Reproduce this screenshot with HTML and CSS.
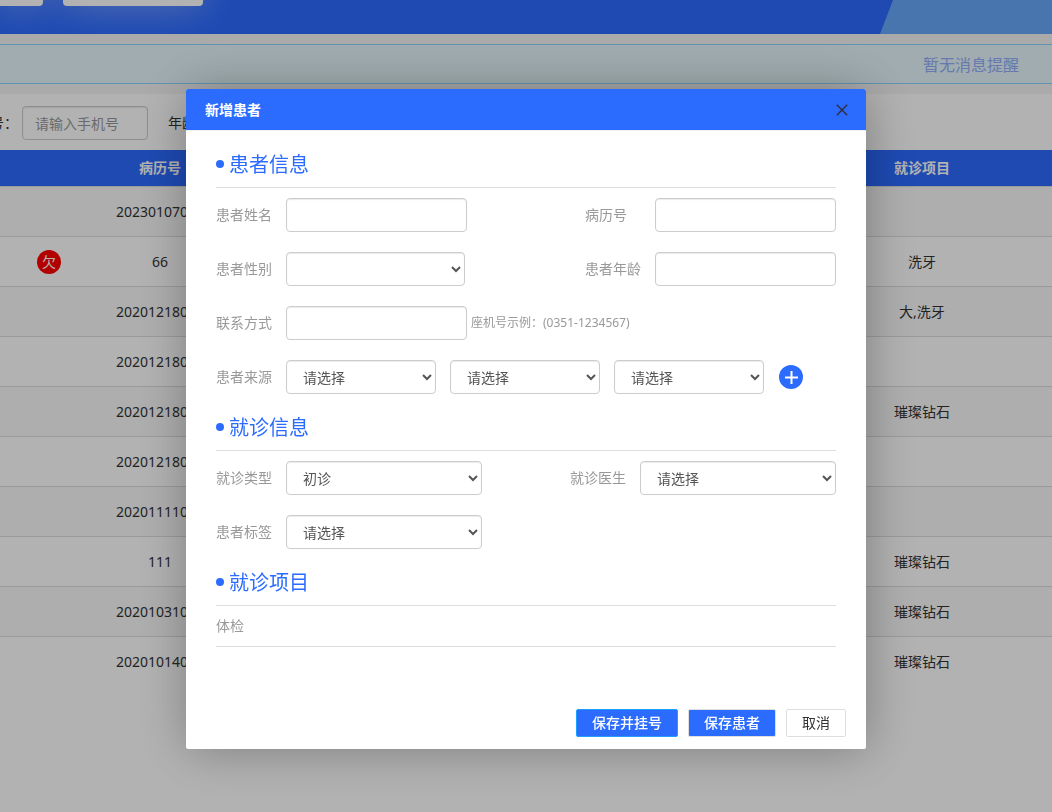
FILE: index.html
```
<!DOCTYPE html>
<html lang="zh-CN">
<head>
<meta charset="utf-8">
<title>新增患者</title>
<link rel="stylesheet" href="styles.css">
</head>
<body>
<main class="page">
  <header class="banner">
    <div class="banner-card banner-card-first"></div>
    <div class="banner-card"></div>
    <svg class="banner-slope" viewBox="0 0 172 34" preserveAspectRatio="none" aria-hidden="true"><path d="M13 0H172V34H0Z" fill="#68a8fa"/></svg>
  </header>
  <div class="notice"><span>暂无消息提醒</span></div>
  <section class="content">
    <div class="filters">
      <label class="filter-label" for="phone">手机号：</label>
      <input class="filter-input" id="phone" type="text" placeholder="请输入手机号">
      <span class="filter-age">年龄：</span>
    </div>
    <table class="records">
      <colgroup><col class="col-flag"><col class="col-number"><col><col class="col-item"></colgroup>
      <thead><tr><th></th><th>病历号</th><th></th><th>就诊项目</th></tr></thead>
      <tbody>
        <tr><td></td><td>20230107001</td><td></td><td></td></tr>
        <tr><td><span class="owed">欠</span></td><td>66</td><td></td><td>洗牙</td></tr>
        <tr><td></td><td>20201218004</td><td></td><td>大,洗牙</td></tr>
        <tr><td></td><td>20201218003</td><td></td><td></td></tr>
        <tr><td></td><td>20201218002</td><td></td><td>璀璨钻石</td></tr>
        <tr><td></td><td>20201218001</td><td></td><td></td></tr>
        <tr><td></td><td>20201111001</td><td></td><td></td></tr>
        <tr><td></td><td>111</td><td></td><td>璀璨钻石</td></tr>
        <tr><td></td><td>20201031001</td><td></td><td>璀璨钻石</td></tr>
        <tr><td></td><td>20201014001</td><td></td><td>璀璨钻石</td></tr>
      </tbody>
    </table>
  </section>
</main>
<div class="overlay">
  <form class="dialog" role="dialog" aria-labelledby="dialog-title">
    <header class="dialog-header">
      <h1 class="dialog-title" id="dialog-title">新增患者</h1>
      <button class="close" type="button" aria-label="关闭"><svg width="12" height="12" viewBox="0 0 12 12"><path d="M.8.8l10.4 10.4M11.2.8L.8 11.2" stroke="#2e2d3c" stroke-width="1.4"/></svg></button>
    </header>
    <div class="dialog-body">
      <section class="section">
        <h2 class="section-title">患者信息</h2>
        <div class="fields">
          <div class="row">
            <div class="field"><label for="name">患者姓名</label><input class="control" id="name" type="text"></div>
            <div class="field"><label for="number">病历号</label><input class="control" id="number" type="text"></div>
          </div>
          <div class="row">
            <div class="field"><label for="sex">患者性别</label><select class="control control-sex" id="sex"><option></option><option>男</option><option>女</option></select></div>
            <div class="field"><label for="age">患者年龄</label><input class="control" id="age" type="text"></div>
          </div>
          <div class="row">
            <div class="field"><label for="contact">联系方式</label><input class="control" id="contact" type="text"><span class="hint">座机号示例：(0351-1234567)</span></div>
          </div>
          <div class="row">
            <div class="field"><label for="source">患者来源</label>
              <div class="sources">
                <select class="control control-source" id="source"><option>请选择</option></select>
                <select class="control control-source" aria-label="二级来源"><option>请选择</option></select>
                <select class="control control-source" aria-label="三级来源"><option>请选择</option></select>
                <button class="add" type="button" aria-label="添加来源"><svg width="24" height="24" viewBox="0 0 24 24"><circle cx="12" cy="12" r="12" fill="#2b6cff"/><path d="M6 12.5h13M12.5 6v13" stroke="#fff" stroke-width="2"/></svg></button>
              </div>
            </div>
          </div>
        </div>
      </section>
      <section class="section">
        <h2 class="section-title">就诊信息</h2>
        <div class="fields">
          <div class="row">
            <div class="field"><label for="type">就诊类型</label><select class="control control-wide" id="type"><option>初诊</option><option>复诊</option></select></div>
            <div class="field"><label for="doctor">就诊医生</label><select class="control control-wide" id="doctor"><option>请选择</option></select></div>
          </div>
          <div class="row">
            <div class="field"><label for="tag">患者标签</label><select class="control control-wide" id="tag"><option>请选择</option></select></div>
          </div>
        </div>
      </section>
      <section class="section">
        <h2 class="section-title">就诊项目</h2>
        <div class="project">体检</div>
      </section>
    </div>
    <footer class="dialog-footer">
      <button class="btn btn-main" type="submit">保存并挂号</button>
      <button class="btn btn-save" type="button">保存患者</button>
      <button class="btn" type="button">取消</button>
    </footer>
  </form>
</div>
</body>
</html>
```
FILE: styles.css
```
* { box-sizing: border-box; }

body {
  margin: 0;
  background: #fff;
  color: #333;
  font: 14px/20px "Noto Sans", "Noto Sans CJK SC", sans-serif;
}

input, select, button { font: inherit; }

.page { min-height: 100vh; overflow: hidden; }

.banner {
  position: relative;
  display: flex;
  align-items: flex-start;
  gap: 20px;
  height: 34px;
  overflow: hidden;
  background: #2b6aff;
}

.banner-card {
  width: 140px;
  height: 66px;
  margin-top: -60px;
  border-radius: 0 0 4px 4px;
  background: #fff;
  box-shadow: 0 0 40px rgba(255, 255, 255, .4);
}

.banner-card-first { width: 43px; border-radius: 0 0 4px 0; }

.banner-slope {
  position: absolute;
  top: 0;
  right: 0;
  width: 172px;
  height: 34px;
}

.notice {
  display: flex;
  align-items: center;
  justify-content: flex-end;
  height: 40px;
  margin: 10px 0;
  padding: 2px 33px 0 0;
  border: solid #8cd4ff;
  border-width: 1px 0;
  background: #e6f7fc;
  color: #94aefa;
  font-size: 16px;
  box-shadow: 0 0 0 10px #f4f4f4;
}

.filters {
  display: flex;
  align-items: center;
  padding: 12px 0 10px;
}

.filter-label {
  display: flex;
  justify-content: flex-end;
  width: 18px;
  margin-right: 4px;
  overflow: hidden;
  white-space: nowrap;
}

.filter-input {
  width: 126px;
  height: 34px;
  margin-right: 20px;
  padding: 0 12px;
  border: 1px solid #ccc;
  border-radius: 4px;
  background: #fff;
  box-shadow: inset 0 1px 1px rgba(0, 0, 0, .08);
}

.filter-input::placeholder { color: #999; }

.records {
  width: 100%;
  border-collapse: separate;
  border-spacing: 0;
  table-layout: fixed;
  text-align: center;
}

.col-flag { width: 98px; }
.col-number { width: 124px; }
.col-item { width: 260px; }

.records th, .records td { padding: 0; border-bottom: 1px solid #ddd; }
.records th { height: 37px; background: #2b6aff; color: #fff; font-weight: 700; }
.records td { height: 50px; }
.records tbody tr:nth-child(odd) { background: #f9f9f9; }
.records tbody tr:last-child td { border-bottom: 0; }

.owed {
  display: inline-block;
  width: 24px;
  border-radius: 50%;
  background: #f00;
  color: #fff;
  line-height: 24px;
}

.overlay {
  position: fixed;
  inset: 0;
  display: flex;
  align-items: flex-start;
  justify-content: center;
  padding-top: 89px;
  background: rgba(0, 0, 0, .3);
}

.dialog {
  display: flex;
  flex-direction: column;
  width: 680px;
  max-width: 100%;
  overflow: hidden;
  border-radius: 2px;
  background: #fff;
  box-shadow: 1px 1px 50px rgba(0, 0, 0, .3);
}

.dialog-header {
  display: flex;
  align-items: center;
  justify-content: space-between;
  height: 42px;
  padding: 1px 18px 0 19px;
  border-bottom: 1px solid #eee;
  background: #2b6cff;
}

.dialog-title { margin: 0; color: #fff; font-size: 14px; line-height: 20px; }

.close, .add {
  display: flex;
  padding: 0;
  border: 0;
  background: none;
  cursor: pointer;
}

.dialog-body { padding: 12px 30px 0; }

.section-title {
  display: flex;
  align-items: center;
  gap: 5px;
  height: 45px;
  margin: 0;
  border-bottom: 1px solid #ddd;
  color: #2b6cff;
  font-size: 20px;
  font-weight: 400;
  line-height: 28px;
}

.section-title::before {
  content: "";
  width: 8px;
  height: 8px;
  margin-bottom: 2px;
  border-radius: 50%;
  background: #2b6cff;
}

.fields { display: flex; flex-direction: column; gap: 20px; padding: 10px 0 12px; }
.row { display: flex; justify-content: space-between; }
.field { display: flex; align-items: center; color: #999; }
.field label { width: 70px; }

.control {
  width: 181px;
  height: 34px;
  padding: 6px 12px;
  border: 1px solid #ccc;
  border-radius: 4px;
  background-color: #fff;
  color: #555;
  box-shadow: inset 0 1px 1px rgba(0, 0, 0, .08);
}

select.control { padding: 6px 1px 6px 12px; }
.control-sex { width: 179px; }
.control-source { width: 150px; }
.control-wide { width: 196px; }
.hint { margin-left: 4px; font-size: 12px; }
.sources { display: flex; align-items: center; gap: 14px; }
.add { margin-left: 1px; }
.project { padding: 10px 0; border-bottom: 1px solid #ddd; color: #999; }

.dialog-footer {
  display: flex;
  justify-content: flex-end;
  gap: 10px;
  padding: 62px 20px 12px;
}

.btn {
  height: 28px;
  padding: 0 15px;
  border: 1px solid #dedede;
  border-radius: 2px;
  background: #fff;
  color: #333;
  line-height: 26px;
  cursor: pointer;
}

.btn-main, .btn-save { background: #2b6cff; color: #fff; font-weight: 500; }
.btn-main { border-color: #1e9fff; }
```
